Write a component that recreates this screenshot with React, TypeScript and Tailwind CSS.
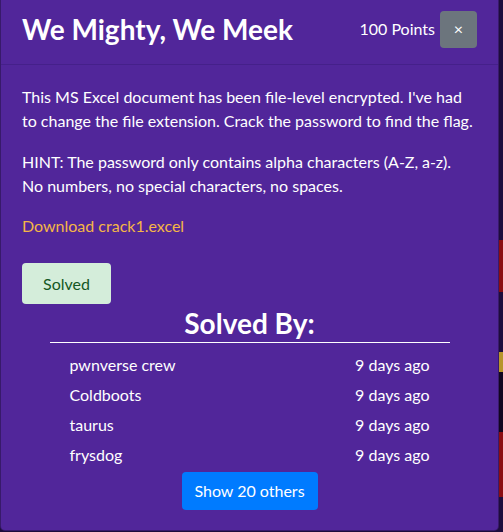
import React from 'react';

const solvers = [
  { name: 'pwnverse crew', when: '9 days ago' },
  { name: 'Coldboots', when: '9 days ago' },
  { name: 'taurus', when: '9 days ago' },
  { name: 'frysdog', when: '9 days ago' },
];

export default function App() {
  return (
    <div
      className="relative w-[503px] h-[532px] overflow-hidden bg-[#1d0c3c] flex"
      style={{ fontFamily: 'Lato, "Noto Sans", sans-serif' }}
    >
      <div className="w-[499px] h-[531px] shrink-0 bg-[#51269a] border border-t-0 border-black/30 rounded-b-[5px] text-white flex flex-col">
        <div className="h-[65px] pb-[6px] px-[21px] flex items-center border-b border-[#45208a]">
          <h1 className="text-[28px] font-bold leading-none flex-1">We Mighty, We Meek</h1>
          <span className="text-[16px] mr-[5px]">100 Points</span>
          <button className="w-[37px] h-[37px] rounded bg-[#6c757d] text-white text-[16px] flex items-center justify-center">
            ×
          </button>
        </div>

        <div className="px-[21px] pt-[20px] text-[16px] leading-[24px]">
          <p>
            This MS Excel document has been file-level encrypted. I've had to change the file extension. Crack the
            password to find the flag.
          </p>
          <p className="mt-[17px]">
            HINT: The password only contains alpha characters (A-Z, a-z).
            <br />
            No numbers, no special characters, no spaces.
          </p>
          <p className="mt-[16px]">
            <a className="text-[#f5b646]">Download crack1.excel</a>
          </p>
          <button className="mt-[25px] w-[89px] h-[41px] rounded bg-[#d4edda] text-[#155724] text-[16px]">
            Solved
          </button>
        </div>

        <div className="flex flex-col items-center mt-[2px]">
          <h2 className="text-[28px] font-bold leading-[34px]">Solved By:</h2>
          <div className="w-[400px] h-px bg-white mt-[2px]" />
          <div className="w-[360px] mt-[7px]">
            {solvers.map((s) => (
              <div key={s.name} className="flex justify-between h-[30px] items-center text-[16px]">
                <span>{s.name}</span>
                <span>{s.when}</span>
              </div>
            ))}
          </div>
          <button className="mt-[2px] w-[136px] h-[38px] rounded bg-[#007bff] text-white text-[16px]">
            Show 20 others
          </button>
        </div>
      </div>

      <div className="flex-1 flex flex-col">
        <div className="h-[240px]" />
        <div className="h-[52px] bg-[#8b0d12]" />
        <div className="h-[60px]" />
        <div className="h-[20px] bg-[#b7952a]" />
        <div className="h-[60px] bg-[#110620]" />
        <div className="h-[65px] bg-[#8b0d12]" />
      </div>
    </div>
  );
}
